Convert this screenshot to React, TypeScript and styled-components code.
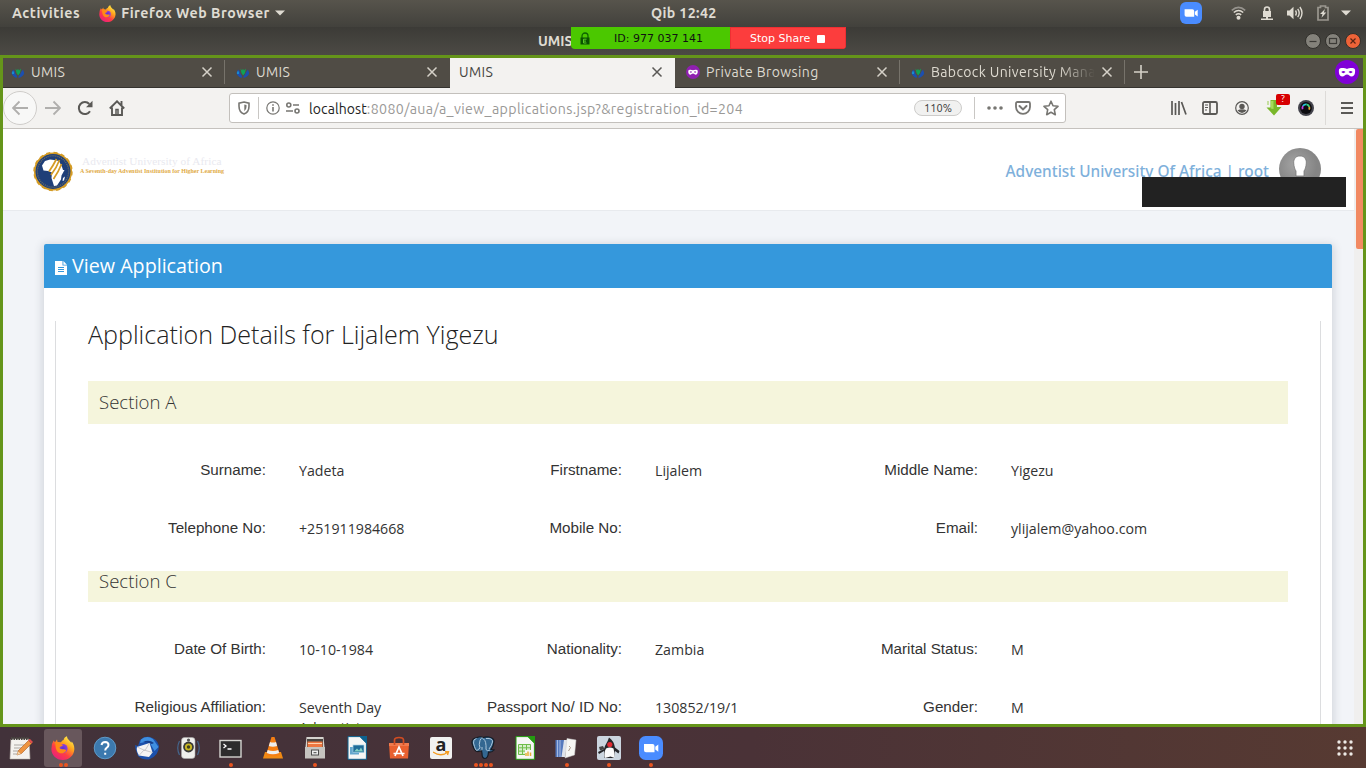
import React from "react";
import styled, { createGlobalStyle } from "styled-components";

const GlobalStyle = createGlobalStyle`
  * { box-sizing: border-box; }
  body { margin: 0; overflow: hidden; }
  svg { display: block; flex: none; }
`;

const uiFont = `"Ubuntu", "Noto Sans", "Open Sans", sans-serif`;
const pageFont = `"Open Sans", sans-serif`;

const Desktop = styled.div`
  position: relative;
  width: 1366px;
  height: 768px;
  display: flex;
  flex-direction: column;
  overflow: hidden;
  font-family: ${uiFont};
  white-space: nowrap;
`;

const Label = styled.span<{ $size?: number; $spacing?: number; $bold?: boolean; $color?: string }>`
  font-size: ${(p) => p.$size ?? 14}px;
  letter-spacing: ${(p) => p.$spacing ?? 0}px;
  font-weight: ${(p) => (p.$bold ? 700 : 400)};
  color: ${(p) => p.$color ?? "inherit"};
  line-height: 20px;
`;

/* ---------- system bar ---------- */

const SystemBar = styled.div`
  height: 27px;
  flex: none;
  display: grid;
  grid-template-columns: 651px 1fr 187px;
  align-items: center;
  padding-bottom: 1px;
  color: #dfdbd2;
  background: linear-gradient(#57544c, #42413c);
`;
const SystemLeft = styled.div`
  display: flex;
  align-items: center;
  padding-left: 12px;
`;
const AppMenu = styled.div`
  display: flex;
  align-items: center;
  gap: 5px;
  margin-left: 19px;
`;
const SystemTray = styled.div`
  display: flex;
  align-items: center;
  padding-left: 1px;
`;
const TrayItem = styled.div<{ $gap: number }>`
  margin-right: ${(p) => p.$gap}px;
`;

/* ---------- title bar ---------- */

const TitleBar = styled.div`
  height: 28px;
  flex: none;
  display: flex;
  align-items: center;
  justify-content: space-between;
  padding: 0 5px 0 538px;
  color: #dfdbd2;
  background: linear-gradient(#3c3b37, #4c4a45);
`;
const WindowButtons = styled.div`
  display: flex;
  gap: 4px;
`;
const SharePill = styled.div`
  position: absolute;
  left: 571px;
  top: 27px;
  width: 275px;
  height: 22px;
  display: flex;
  border-radius: 0 0 4px 4px;
  overflow: hidden;
  font-family: "DejaVu Sans", sans-serif;
`;
const ShareId = styled.div`
  width: 159px;
  display: flex;
  align-items: center;
  padding: 1px 0 0 9px;
  gap: 24px;
  background: #4bc800;
  color: #111;
`;
const StopShare = styled.div`
  flex: 1;
  display: flex;
  align-items: center;
  padding: 1px 0 0 19px;
  gap: 7px;
  background: #fc3d3d;
  border: 1px solid #ee2f33;
  color: #fff;
`;
const StopSquare = styled.i`
  width: 8px;
  height: 8px;
  background: #fff;
  border-radius: 1px;
`;

/* ---------- browser ---------- */

const Browser = styled.div`
  height: 672px;
  flex: none;
  display: flex;
  flex-direction: column;
  border: 3px solid #65951a;
`;
const TabStrip = styled.div`
  height: 30px;
  flex: none;
  display: flex;
  background: #504c45;
`;
const TabBox = styled.div<{ $active?: boolean; $first?: boolean; $divider?: boolean }>`
  width: ${(p) => (p.$first ? 222 : 225)}px;
  display: flex;
  align-items: center;
  padding-left: ${(p) => (p.$first ? 8 : p.$active ? 9 : 11)}px;
  padding-right: 12px;
  padding-bottom: 1px;
  gap: 6px;
  color: ${(p) => (p.$active ? "#45443f" : "#dedad0")};
  background: ${(p) => (p.$active ? "#f3f2f0" : "transparent")};
  border-bottom: 1px solid ${(p) => (p.$active ? "#f3f2f0" : "#35332f")};
  position: relative;
  &::after {
    content: "";
    display: ${(p) => (p.$divider ? "block" : "none")};
    position: absolute;
    right: 0;
    top: 2px;
    width: 1px;
    height: 24px;
    background: #77736b;
  }
`;
const TabTitle = styled.div<{ $fade?: boolean }>`
  flex: 1;
  overflow: hidden;
  mask-image: ${(p) => (p.$fade ? "linear-gradient(90deg,#000 78%,transparent 100%)" : "none")};
`;
const TabEnd = styled.div`
  flex: 1;
  display: flex;
  align-items: center;
  justify-content: space-between;
  padding: 0 4px 2px 9px;
  border-bottom: 1px solid #35332f;
`;

const Toolbar = styled.div`
  height: 41px;
  flex: none;
  display: flex;
  align-items: center;
  background: #f3f2f0;
  border-bottom: 1px solid #c5c2be;
`;
const NavButtons = styled.div`
  width: 226px;
  display: flex;
  align-items: center;
`;
const BackCircle = styled.div`
  width: 34px;
  height: 34px;
  border: 1px solid #cfcdca;
  border-radius: 50%;
  background: #f8f8f7;
  display: flex;
  align-items: center;
  justify-content: center;
  margin-right: 8px;
`;
const Spacer = styled.div<{ $w: number }>`
  width: ${(p) => p.$w}px;
  flex: none;
`;
const UrlBar = styled.div`
  width: 837px;
  height: 30px;
  display: flex;
  align-items: center;
  background: #fff;
  border: 1px solid #c3c0bc;
  border-radius: 3px;
  padding: 0 6px 0 8px;
`;
const Rule = styled.div<{ $h: number; $color?: string }>`
  width: 1px;
  height: ${(p) => p.$h}px;
  background: ${(p) => p.$color ?? "#c9c7c4"};
`;
const UrlText = styled.div`
  width: 605px;
  padding-top: 1px;
  color: #9a9997;
`;
const ZoomBadge = styled.div`
  width: 48px;
  height: 16px;
  border: 1px solid #cdccca;
  border-radius: 8px;
  background: #f1f1f0;
  display: flex;
  align-items: center;
  justify-content: center;
  color: #3c3c3b;
`;
const Extension = styled.div`
  position: relative;
`;
const ExtensionBadge = styled.div`
  position: absolute;
  left: 10px;
  top: -6px;
  width: 14px;
  height: 11px;
  border-radius: 2px;
  background: #d70000;
  color: #fff;
  font-size: 9px;
  line-height: 11px;
  text-align: center;
`;

/* ---------- page ---------- */

const Viewport = styled.div`
  flex: 1;
  min-height: 0;
  display: flex;
  overflow: hidden;
  font-family: ${pageFont};
`;
const Page = styled.div`
  flex: 1;
  display: flex;
  flex-direction: column;
  background: #f2f4f8;
`;
const ScrollTrack = styled.div`
  width: 9px;
  padding-left: 2px;
  background: #f0efee;
`;
const ScrollThumb = styled.div`
  height: 120px;
  background: #f28962;
  border-radius: 2px 0 0 2px;
`;
const PageHeader = styled.header`
  position: relative;
  height: 82px;
  flex: none;
  display: flex;
  justify-content: space-between;
  background: #fff;
  border-bottom: 1px solid #e8eaee;
`;
const Brand = styled.div`
  display: flex;
  padding: 22px 0 0 30px;
  gap: 7px;
`;
const BrandText = styled.div`
  display: flex;
  flex-direction: column;
  padding-top: 4px;
  font-family: "Liberation Serif", serif;
`;
const BrandName = styled.span`
  font-size: 11.3px;
  line-height: 13px;
  padding-left: 2px;
  color: #e9e9ef;
  letter-spacing: 0.06px;
`;
const BrandMotto = styled.span`
  font-size: 6px;
  line-height: 6px;
  font-weight: 700;
  color: #dfab46;
  letter-spacing: -0.02px;
`;
const Account = styled.div`
  display: flex;
  padding: 19px 33px 0 0;
  gap: 10px;
  color: #7eb0db;
`;
const AccountName = styled.div`
  font-family: "Noto Sans", sans-serif;
  padding-top: 14px;
  font-size: 15.4px;
  font-weight: 500;
  line-height: 20px;
`;
const Redaction = styled.div`
  position: absolute;
  left: 1139px;
  top: 48px;
  width: 204px;
  height: 30px;
  background: #222;
`;
const Card = styled.section`
  flex: none;
  width: 1288px;
  height: 600px;
  margin: 33px 0 0 41px;
  background: #fff;
  border-radius: 2px 2px 0 0;
  box-shadow: 0 2px 9px 2px rgba(50, 60, 80, 0.16);
`;
const CardHeader = styled.div`
  height: 44px;
  display: flex;
  align-items: center;
  padding: 0 0 0 11px;
  gap: 5px;
  background: #3598dc;
  border-radius: 2px 2px 0 0;
  color: #fff;
`;
const CardTitle = styled.h4`
  margin: 0 0 1px;
  font-weight: 400;
  font-size: 19.7px;
  line-height: 26px;
`;
const CardBody = styled.div`
  margin: 33px 11px 0;
  height: 520px;
  padding: 0 32px;
  border: solid #dcdddf;
  border-width: 0 1px;
`;
const Heading = styled.h3`
  margin: 0;
  height: 60px;
  font-weight: 300;
  font-size: 25.1px;
  line-height: 26px;
  color: #222;
`;
const SectionBar = styled.div<{ $h: number; $pad: number }>`
  height: ${(p) => p.$h}px;
  padding: ${(p) => p.$pad}px 0 0 11px;
  background: #f5f5dc;
  font-size: 18.6px;
  line-height: 19px;
  font-weight: 300;
  color: #333;
`;
const FieldGrid = styled.div<{ $top: number }>`
  display: grid;
  grid-template-columns: repeat(3, 178px 178px);
  grid-auto-rows: 58px;
  padding-top: ${(p) => p.$top}px;
  height: 147px;
`;
const FieldLabel = styled.div`
  text-align: right;
  font: 15.2px / 20px "Liberation Sans", sans-serif;
  color: #333;
`;
const FieldValue = styled.div`
  padding: 1px 20px 0 33px;
  font-size: 14.2px;
  line-height: 20px;
  color: #333;
  white-space: normal;
`;

/* ---------- dock ---------- */

const Dock = styled.div`
  flex: 1;
  display: flex;
  justify-content: space-between;
  align-items: flex-start;
  padding: 2px 13px 0 2px;
  background: linear-gradient(90deg, #42323a, #4a3237 55%, #573a32);
`;
const DockItems = styled.div`
  display: flex;
  gap: 4px;
`;
const DockItem = styled.div<{ $active?: boolean }>`
  position: relative;
  width: 38px;
  height: 38px;
  display: flex;
  align-items: center;
  justify-content: center;
  border-radius: 3px;
  background: ${(p) => (p.$active ? "#68575c" : "transparent")};
`;
const DockDots = styled.div`
  position: absolute;
  left: 0;
  right: 0;
  bottom: 0;
  display: flex;
  justify-content: center;
  gap: 1px;
`;
const DockDot = styled.i`
  width: 4px;
  height: 4px;
  border-radius: 50%;
  background: #e95420;
`;
const GridButton = styled.div`
  padding-top: 11px;
`;

/* ---------- icons ---------- */

const Firefox = ({ size, id }: { size: number; id: string }) => (
  <svg width={size} height={size} viewBox="0 0 24 24">
    <defs>
      <linearGradient id={id} x1="0.85" y1="0.05" x2="0.2" y2="0.95">
        <stop offset="0" stopColor="#fff44f" />
        <stop offset=".35" stopColor="#ffa21c" />
        <stop offset=".65" stopColor="#ff3d44" />
        <stop offset="1" stopColor="#e8207c" />
      </linearGradient>
      <radialGradient id={id + "p"}>
        <stop offset="0" stopColor="#5b34cf" />
        <stop offset="1" stopColor="#9640d8" />
      </radialGradient>
    </defs>
    <path fill={`url(#${id})`} d="M1 8 2.6 4.5 4 6.2 6 3.5 6.6 6 10 6.2C11 4.5 12 4.2 12.6 4 12.7 2 14.5.5 16 .2 16 3 19 4.5 20.3 6.7L20.8 5.5C23 8.5 24 12 23 15.5 21.5 21 17 24 12 24 5 24 .4 19 .4 13Z" />
    <circle cx="12" cy="12.600" r="4.600" fill={`url(#${id}p)`} />
    <path fill="#ff8a16" d="M4 6.3c2.5-.8 4 .2 5 1.3L12 9c-1 1.6-3.5 1.2-3.4 3 1.7 2.4 5 .3 6.7 2.2-2.2 4.600-8 3.600-9.600.200C4 11.300 5 9 4 6.300Z" />
  </svg>
);

const Camera = ({ size }: { size: number }) => (
  <svg width={size} height={size} viewBox="0 0 24 24">
    <rect width="24" height="24" rx="6.5" fill="#4a8cff" />
    <path fill="#fff" d="M5 8h8.5a2 2 0 0 1 2 2v6.2H7a2 2 0 0 1-2-2ZM16.3 10.7 19.3 8.5v7.3l-3-2.2Z" />
  </svg>
);

const Caret = () => (
  <svg width="10" height="6" viewBox="0 0 10 6"><path d="M0 .5h10L5 5.5Z" fill="#dfdbd2" /></svg>
);

const Wifi = () => (
  <svg width="15" height="14" viewBox="0 0 15 14" fill="none" strokeWidth="1.6">
    <path d="M.8 4.3Q7.5-1.5 14.2 4.3" stroke="#96938d" />
    <path d="M2.8 6.5Q7.5 2.5 12.2 6.5M4.8 8.8Q7.5 6.8 10.2 8.8" stroke="#dfdbd2" />
    <circle cx="7.5" cy="11.8" r="2" fill="#dfdbd2" />
  </svg>
);

const NetLock = () => (
  <svg width="12" height="15" viewBox="0 0 12 15">
    <path d="M3.5 6V3.5a2.5 2.5 0 0 1 5 0V6" fill="none" stroke="#dfdbd2" strokeWidth="1.6" />
    <path d="M2 5h8v6H7v1.5h5V14H0v-1.5h5V11H2Z" fill="#dfdbd2" />
  </svg>
);

const Speaker = () => (
  <svg width="16" height="14" viewBox="0 0 16 14">
    <path d="M0 4.5h2.5L6.5.8v12.4L2.5 9.500H0Z" fill="#dfdbd2" />
    <path d="M8.5 4.5q1.6 2.5 0 5M10.7 2.8q3 4.2 0 8.4M12.9 1q4.2 6 0 12" fill="none" stroke="#dfdbd2" strokeWidth="1.4" />
  </svg>
);

const Battery = () => (
  <svg width="12" height="16" viewBox="0 0 12 16">
    <path d="M1 2.5h2.5V1h5v1.5H11V15H1Z" fill="none" stroke="#9a978f" strokeWidth="1.7" />
    <path d="M8 4 3 9h2.5L4.5 12.7 9.3 7.6H6.8Z" fill="#dfdbd2" />
  </svg>
);

const WindowButton = ({ kind }: { kind: "min" | "max" | "close" }) => (
  <svg width="16" height="16" viewBox="0 0 16 16">
    <circle cx="8" cy="8" r="7.5" fill={kind === "close" ? "#ee6338" : "#84827b"} stroke="#31302c" />
    <g stroke={kind === "close" ? "#5a2414" : "#3c3b37"} fill="none" strokeWidth="1.2">
      {kind === "min" && <path d="M4.5 8.5h7" />}
      {kind === "max" && <rect x="4.5" y="5.5" width="7" height="5" />}
      {kind === "close" && <path d="m5.5 5.5 5 5m0-5-5 5" />}
    </g>
  </svg>
);

const ShareLock = () => (
  <svg width="10" height="13" viewBox="0 0 10 13">
    <path d="M2 6V4a3 3 0 0 1 6 0v2" fill="none" stroke="#0d6500" strokeWidth="1.3" />
    <rect x=".5" y="5.5" width="9" height="7" fill="#0a5400" />
    <path d="M6.5 7.2h-3v3.8h3M3.5 9.1h2.5" fill="none" stroke="#62d62a" strokeWidth=".9" />
  </svg>
);

const Globe = () => (
  <svg width="14" height="13" viewBox="0 0 14 13">
    <path fill="#1b4fb0" d="M2 3.500 3.500 5 4.500 8 6 10 5.500 12Q1.500 10.500.5 7ZM12 3.500l-1.500 2L9 8.500 7.500 10.500v1.500q5-1.500 5.700-5Z" />
    <path fill="#178bd0" d="M1 5.500h2v2.500H1Z" />
    <path fill="#0fa355" d="m4.500 2.500 1.500 2 1-1.700 1 1.700 2-2L9 7 7.200 9.500 5.500 7Z" />
  </svg>
);

const Cross = ({ color }: { color: string }) => (
  <svg width="12" height="12" viewBox="0 0 12 12"><path d="m1.5 1.5 9 9m0-9-9 9" stroke={color} strokeWidth="1.5" /></svg>
);

const Plus = () => (
  <svg width="14" height="14" viewBox="0 0 14 14"><path d="M7 0v14M0 7h14" stroke="#d5d1c8" strokeWidth="1.6" /></svg>
);

const Mask = ({ size, color }: { size: number; color: string }) => (
  <svg width={size} height={size} viewBox="0 0 24 24">
    <circle cx="12" cy="12" r="12" fill={color} />
    <path fill="#fff" fillRule="evenodd" d="M4 9.5C5 7.5 9.5 7.8 12 9c2.5-1.2 7-1.5 8 .5.5 3-.3 7-3.2 7-2.3 0-2.8-2-4.8-2s-2.500 2-4.800 2C4.300 16.500 3.500 12.500 4 9.500ZM6.300 12q2 2.300 4.200 0-2-2.200-4.200 0Zm7.200 0q2.200 2.300 4.200 0-2.200-2.200-4.200 0Z" />
  </svg>
);

const Arrow = ({ flip }: { flip?: boolean }) => (
  <svg width="16" height="16" viewBox="0 0 16 16" fill="none" stroke="#b0afad" strokeWidth="1.8">
    <path d={flip ? "M0 8h15M8.5 1.5 15 8l-6.5 6.5" : "M16 8H1M7.5 1.5 1 8l6.5 6.5"} />
  </svg>
);

const Reload = () => (
  <svg width="16" height="16" viewBox="0 0 16 16">
    <path d="M13 11.2A6 6 0 1 1 12.3 4" fill="none" stroke="#5a5956" strokeWidth="2" />
    <path d="M15.5.8V7.3H9Z" fill="#5a5956" />
  </svg>
);

const Home = () => (
  <svg width="16" height="16" viewBox="0 0 16 16" fill="none" stroke="#5a5956" strokeWidth="1.9">
    <path d="M.8 8.5 8 1.3l7.2 7.2M3 7.500V15h10V7.500M12.500 1v4" />
    <path d="M7 14.5v-5h2v5" strokeWidth="1.5" />
  </svg>
);

const Shield = () => (
  <svg width="12" height="14" viewBox="0 0 12 14">
    <path d="M6 1 11 2.2v3Q11 11 6 13 1 11 1 5.2v-3Z" fill="none" stroke="#777672" strokeWidth="1.6" />
    <path d="M6.3 3.5 8.5 4v2q0 2.8-2.2 4.2Z" fill="#777672" />
  </svg>
);

const Info = () => (
  <svg width="14" height="14" viewBox="0 0 14 14" fill="none" stroke="#777672">
    <circle cx="7" cy="7" r="6.2" strokeWidth="1.2" /><path d="M7 6v4.5M7 3.3v1.5" strokeWidth="1.6" />
  </svg>
);

const Permissions = () => (
  <svg width="14" height="12" viewBox="0 0 14 12" fill="none" stroke="#777672" strokeWidth="1.6">
    <circle cx="2.8" cy="3" r="2" /><path d="M7 3h6M0 9h7" /><circle cx="11" cy="9" r="2" />
  </svg>
);

const Dots = () => (
  <svg width="16" height="4" viewBox="0 0 16 4" fill="#777672"><circle cx="2" cy="2" r="1.8" /><circle cx="8" cy="2" r="1.8" /><circle cx="14" cy="2" r="1.8" /></svg>
);

const Pocket = () => (
  <svg width="16" height="14" viewBox="0 0 16 14" fill="none" stroke="#777672" strokeWidth="1.8">
    <path d="M2.5 1h11Q15 1 15 2.5V6a7 6.8 0 0 1-14 0V2.5Q1 1 2.5 1Z" /><path d="m4.5 5 3.5 3.4L11.5 5" strokeWidth="2" strokeLinecap="round" />
  </svg>
);

const Star = () => (
  <svg width="16" height="16" viewBox="0 0 16 16"><path d="m8 1.200 2 4.600 5 .5-3.700 3.400 1 5L8 12.200l-4.300 2.500 1-5L1 6.300l5-.5Z" fill="none" stroke="#777672" strokeWidth="1.6" strokeLinejoin="round" /></svg>
);

const Library = () => (
  <svg width="16" height="14" viewBox="0 0 16 14" stroke="#5a5956" strokeWidth="1.7" fill="none"><path d="M1 0v14M4.5 2v12M8 0v14M10.5 1 15 13.5" /></svg>
);

const Sidebar = () => (
  <svg width="16" height="14" viewBox="0 0 16 14" stroke="#5a5956" fill="none">
    <rect x="1" y="1" width="14" height="12" rx="1.5" strokeWidth="1.8" /><path d="M8 1v12" strokeWidth="1.6" /><path d="M3 4h3M3 6.5h3M3 9h2" strokeWidth="1.2" />
  </svg>
);

const Profile = () => (
  <svg width="14" height="14" viewBox="0 0 14 14">
    <circle cx="7" cy="7" r="6.3" fill="none" stroke="#5a5956" strokeWidth="1.2" />
    <circle cx="7" cy="5.4" r="2.7" fill="#5a5956" /><path d="M2.500 9.200Q7 7.300 11.500 9.200 9.500 12 7 12 4.500 12 2.500 9.200Z" fill="#5a5956" />
  </svg>
);

const Download = () => (
  <svg width="16" height="16" viewBox="0 0 16 16">
    <path d="M4.5 0H11v7h4.5L8 15.5.5 7.500H4.500Z" fill="#79b72a" /><path d="M5 1h2.500v8L3 8.500h2Z" fill="#a6d957" /><path d="M1 1h2v4H1Z" fill="#c6dfa0" />
  </svg>
);

const Lens = () => (
  <svg width="16" height="16" viewBox="0 0 16 16">
    <circle cx="8" cy="8" r="8" fill="#43434b" /><circle cx="8" cy="8" r="5.9" fill="#0c0c10" />
    <g fill="none" strokeWidth="1.8">
      <path d="M4.6 9.300A3.600 3.600 0 0 1 5 6" stroke="#c43de0" />
      <path d="M5 6a3.600 3.600 0 0 1 3.500-1.600" stroke="#25c9d8" />
      <path d="M8.500 4.400A3.600 3.600 0 0 1 11.300 7" stroke="#3fd07a" />
      <path d="M11.300 7a3.600 3.600 0 0 1-.3 2.600" stroke="#e8a934" />
    </g>
  </svg>
);

const Burger = () => (
  <svg width="12" height="12" viewBox="0 0 12 12"><path d="M0 1h12M0 6h12M0 11h12" stroke="#5a5956" strokeWidth="1.9" /></svg>
);

const Seal = () => (
  <svg width="40" height="41" viewBox="0 0 40 41">
    <circle cx="20" cy="20.5" r="18.3" fill="#1f3f78" stroke="#d49b24" strokeWidth="1.6" />
    <circle cx="20" cy="20.5" r="18.8" fill="none" stroke="#d49b24" strokeWidth="1.8" strokeDasharray="4 3.38" />
    <circle cx="20" cy="20.5" r="15.7" fill="none" stroke="#9c8b57" strokeWidth="1.4" strokeDasharray="1 1" strokeOpacity=".6" />
    <path fill="#fff" d="M9 14.500 12 10l5-1.500L21 9l5 1 3 6 1 3h1.500l-3 5.500-.500 4-4 6-3 .5-2.500-8 .500-5.500-4-1.500-4.500-.500Z" />
    <path fill="#fff" d="m30 27 2-1.500-1 4-1.500.5Z" />
    <path d="M23.500 8q-3 6-7.500 12.500M26.500 9q-3 8-8.500 15M28.500 13q-3 8-8 15" stroke="#d49b24" strokeWidth="1.7" fill="none" />
  </svg>
);

const Avatar = () => (
  <svg width="42" height="42" viewBox="0 0 42 42">
    <defs><radialGradient id="avatar" cx=".4" cy=".4"><stop offset="0" stopColor="#a5a5a5" /><stop offset="1" stopColor="#858585" /></radialGradient></defs>
    <circle cx="21" cy="21" r="21" fill="url(#avatar)" />
    <path d="M21 8c4 0 6.500 2.500 6.300 7-.2 4-1.300 6.500-2.300 8v5h-8v-5c-1-1.500-2.100-4-2.300-8C14.500 10.500 17 8 21 8Z" fill="#fff" stroke="#777" strokeWidth=".8" />
  </svg>
);

const FileSvg = styled.svg`
  margin-top: 4px;
`;
const FileIcon = () => (
  <FileSvg width="12" height="14" viewBox="0 0 12 14">
    <path fill="#fff" d="M0 0h7.500v4.500H12V14H0Z" /><path fill="#fff" d="M8.400 0 12 3.700H8.400Z" />
    <path d="M3 6.500h6M3 8.500h6M3 10.500h6" stroke="#3598dc" />
  </FileSvg>
);

const TextEditor = () => (
  <svg width="24" height="24" viewBox="0 0 24 24">
    <path d="M2 3h18l1 20H1Z" fill="#f4f2ee" stroke="#bdb8b0" strokeWidth=".6" />
    <path d="M2 2.500h18" stroke="#47443f" strokeWidth="3" strokeDasharray="1.5 1" />
    <path d="M5 9h10M5 12h8M4 15h7M4 18h5" stroke="#aaa7a2" />
    <path d="m8 19 1.500-4.500 10-10 3 3-10 10Z" fill="#ee9440" stroke="#a95a1f" strokeWidth=".6" /><path d="m19 4 2-1 3 3-1.500 1.500Z" fill="#e04d4d" /><path d="m8 19 1.200-3.500 2.500 2.300Z" fill="#f3d5aa" />
  </svg>
);
const Help = () => (
  <svg width="24" height="24" viewBox="0 0 24 24">
    <circle cx="12" cy="12" r="10.8" fill="#3c79ae" stroke="#5f9ac8" />
    <path d="M8.500 9Q9 6 12.200 6 15.500 6.200 15.500 9 15.500 10.500 13.700 11.800 12.200 13 12.200 14.500M12.200 16.700v2" stroke="#fff" strokeWidth="2" fill="none" />
  </svg>
);
const Mail = () => (
  <svg width="24" height="24" viewBox="0 0 24 24">
    <path d="M5 4Q9 0 14 .8q8 1.500 10 9Q24 20 14 23.500 7 24 3 20L.5 13 0 9l3 1Z" fill="#1b50ab" />
    <path d="M6 3.500Q12-1 18 3l5.500 8-4 4-4-7-5-2L5 7Z" fill="#3f8fe0" />
    <path d="M8 6q6-3 11 1l-2 1-4-1Z" fill="#163f8c" />
    <path d="m2 11 12.500-4 3 9.500-3.500 4.500-10-1.500Q1 15 2 11Z" fill="#f4f4f4" /><path d="m2 11 8 3.500L14.500 7M4 19.500l5-5.500 8.500 2.500" stroke="#bcbcc2" strokeWidth=".8" fill="none" />
  </svg>
);
const Rhythm = () => (
  <svg width="24" height="24" viewBox="0 0 24 24">
    <path d="M2.500 5q-3.500 7 0 14M20.500 5q3.500 7 0 14" stroke="#44668e" strokeWidth="1.200" fill="none" />
    <rect x="4.500" y="1.500" width="13.500" height="21" rx="3" fill="#efefec" stroke="#aaa" strokeWidth=".6" />
    <circle cx="11.500" cy="4" r="1.600" fill="#555" /><circle cx="11.500" cy="11" r="5.400" fill="#393939" /><circle cx="11.500" cy="11" r="3.600" fill="#c8b624" /><circle cx="11.500" cy="11" r="1.700" fill="#42401f" />
  </svg>
);
const Terminal = () => (
  <svg width="24" height="24" viewBox="0 0 24 24">
    <rect x="1" y="4.500" width="21" height="16.500" fill="#2d2d2d" stroke="#d5d5d0" strokeWidth="1.4" />
    <path d="m4.500 8 2.500 2-2.500 2M8.500 13h4" stroke="#fff" strokeWidth="1.300" fill="none" />
  </svg>
);
const Cone = () => (
  <svg width="24" height="24" viewBox="0 0 24 24">
    <path d="m4 16-2 6.500h20L20 16Z" fill="#f08a13" /><path d="M10.500 1h3L19 19q-7 2.500-14 0Z" fill="#f57e13" />
    <path d="m9 6-1.200 4q4 1.500 8.300 0L15 6q-3 1-6 0ZM6.700 14l-1 3q6 2.500 12.500 0l-1-3q-5 2-10.500 0Z" fill="#eee" />
  </svg>
);
const Files = () => (
  <svg width="24" height="24" viewBox="0 0 24 24">
    <path d="M3.500 1h17l1 10h-19Z" fill="#d5d3cf" /><path d="M4 3h16v8H4Z" fill="#4a4642" /><path d="M4.500 5.500h15V11h-15Z" fill="#ed7640" /><path d="M5 7.500h14" stroke="#ffd2ae" />
    <path d="M2 11h20v11.500H2Z" fill="#c6c4c0" /><rect x="8.500" y="14" width="7" height="5" fill="#eee" stroke="#4d4d4d" /><path d="M10.500 16.700h3" stroke="#444" />
  </svg>
);
const Document = ({ color, sheet }: { color: string; sheet?: boolean }) => (
  <svg width="24" height="24" viewBox="0 0 24 24">
    <path d="M3 .6h12l6.400 6.400v16.300H3Z" fill="#f6f6f5" stroke={color} strokeWidth="1" /><path d="M14 0h8v8Z" fill={color} />
    {sheet ? (
      <><path d="M5.500 8.500h12v10h-12Zm0 3.300h12m-12 3.300h12M9.500 8.500v10m4-10v10" fill="#d7efcc" stroke="#6fbd4a" /><rect x="12" y="14" width="7" height="6" fill="#f6f6f5" /><path d="M13 20v-3m2 3v-4.500m2.500 4.500v-3.500" stroke="#e5b039" strokeWidth="1.500" /></>
    ) : (
      <><rect x="5" y="11" width="9" height="7.500" fill="#63a6cd" /><rect x="8" y="9" width="11" height="7.500" fill="#1f6b98" stroke="#a9d3e5" strokeWidth=".7" /><path d="m9 15.500 3-3 2 2 2-3 2 4Z" fill="#82d1c3" /></>
    )}
  </svg>
);
const Software = () => (
  <svg width="24" height="24" viewBox="0 0 24 24">
    <path d="M2 7h20l-1 15.500H3Z" fill="#e9602f" /><path d="M2 7h20v3H2Z" fill="#f07a4d" /><path d="M7.500 9V4q0-2.500 4.500-2.500T16.500 4v5" stroke="#d04c22" strokeWidth="1.700" fill="none" />
    <path d="m8 20 4-9 4 9M6.500 17.500h11" stroke="#fff" strokeWidth="1.700" fill="none" />
  </svg>
);
const AmazonBox = styled.div`
  position: relative;
  width: 22px;
  height: 22px;
  border-radius: 2px;
  background: #f1f1f0;
  color: #222;
  font: 700 18px / 15px "Open Sans", sans-serif;
  text-align: center;
  svg { position: absolute; left: 3px; bottom: 2px; }
`;
const Amazon = () => (
  <AmazonBox>a<svg width="17" height="6" viewBox="0 0 17 6"><path d="M0 1q8 5.500 15 0M12 .7h3.500L14.500 4" stroke="#f49b20" strokeWidth="1.400" fill="none" /></svg></AmazonBox>
);
const Elephant = () => (
  <svg width="24" height="24" viewBox="0 0 24 24">
    <path d="M6 1.500Q10 0 12 1.500q3-1 6-.5 5 1 5 4.500-.5 4.500-3 8l3 .5q-2 2.500-5.500 2-.5 6.500-3.500 6.500-3 0-3-5l-.5-3q-2 1-3 1Q3 16 1 7 .5 2.500 6 1.500Z" fill="#336791" stroke="#151b24" strokeWidth="1.200" />
    <path d="M5.500 2.500Q2 3 2.500 7 4.500 15 6 14.500l3-2.500Q7.500 8.500 9 4.500T12.500 3q3 2 2.500 10.500 1 2 4 .5M15 2.500q7-.500 6.500 3.500-1 4-3.500 7M11 11q.5 3-1 3.500" stroke="#b9d0e2" strokeWidth=".9" fill="none" />
  </svg>
);
const Books = () => (
  <svg width="24" height="24" viewBox="0 0 24 24">
    <path d="M.5 4h9L8 21H.5Z" fill="#5579bd" /><path d="M2.500 4v17M5 4v17" stroke="#b9c8e8" strokeWidth=".8" /><path d="M9 4h4l-3 17H6.500Z" fill="#dfe3ea" />
    <path d="m12 2.500 9 1.500-1.500 15-9.500 3Z" fill="#f6f6f4" stroke="#ccc" strokeWidth=".5" /><path d="m14 10 1.500 1.500-2 3.500" stroke="#a89888" fill="none" />
  </svg>
);
const Duke = () => (
  <svg width="24" height="24" viewBox="0 0 24 24">
    <rect width="24" height="24" rx="2" fill="#cbd5df" />
    <path d="M8 10q3-5 4-8.500 5 3.500 6 10l4.500 3.500-1 2.500L18 15l-1 7H7.500L7 15l-5 3-1-2 6-3Z" fill="#26262a" />
    <path d="M9 12.500q4-2 7.500 0 1.500 5 1 9.500l-4-1.500L8 22q-1.500-5 1-9.500Z" fill="#fafafa" />
    <circle cx="12.800" cy="8.500" r="2.600" fill="#e22c34" /><path d="m2 11 4-1 1.500 3-4.500 1.500Z" fill="#444" />
  </svg>
);

const AppGrid = () => (
  <svg width="16" height="16" viewBox="0 0 16 16" fill="#eeeae6">
    {[2, 8, 14].map((y) => [2, 8, 14].map((x) => <circle key={`${x}-${y}`} cx={x} cy={y} r="1.7" />))}
  </svg>
);

/* ---------- data ---------- */

type Field = [string, string];

const sectionA: Field[] = [
  ["Surname:", "Yadeta"], ["Firstname:", "Lijalem"], ["Middle Name:", "Yigezu"],
  ["Telephone No:", "+251911984668"], ["Mobile No:", ""], ["Email:", "ylijalem@yahoo.com"],
];
const sectionC: Field[] = [
  ["Date Of Birth:", "10-10-1984"], ["Nationality:", "Zambia"], ["Marital Status:", "M"],
  ["Religious Affiliation:", "Seventh Day Adventist"], ["Passport No/ ID No:", "130852/19/1"], ["Gender:", "M"],
];

const dockApps: { icon: React.ReactNode; dots?: number; active?: boolean }[] = [
  { icon: <TextEditor /> },
  { icon: <Firefox size={24} id="ffDock" />, dots: 2, active: true },
  { icon: <Help /> },
  { icon: <Mail /> },
  { icon: <Rhythm /> },
  { icon: <Terminal />, dots: 1 },
  { icon: <Cone /> },
  { icon: <Files />, dots: 1 },
  { icon: <Document color="#0d628f" /> },
  { icon: <Software /> },
  { icon: <Amazon /> },
  { icon: <Elephant />, dots: 4 },
  { icon: <Document color="#249b10" sheet /> },
  { icon: <Books />, dots: 1 },
  { icon: <Duke />, dots: 1 },
  { icon: <Camera size={24} />, dots: 1 },
];

const Fields = ({ items, top }: { items: Field[]; top: number }) => (
  <FieldGrid $top={top}>
    {items.map(([label, value]) => (
      <React.Fragment key={label}>
        <FieldLabel>{label}</FieldLabel>
        <FieldValue>{value}</FieldValue>
      </React.Fragment>
    ))}
  </FieldGrid>
);

export default function App() {
  return (
    <Desktop>
      <GlobalStyle />
      <SystemBar>
        <SystemLeft>
          <Label $bold $size={14.2} $spacing={0.5}>Activities</Label>
          <AppMenu>
            <Firefox size={17} id="ffTop" />
            <Label $bold $size={14.2} $spacing={0.5}>Firefox Web Browser</Label>
            <Caret />
          </AppMenu>
        </SystemLeft>
        <Label $bold $size={14.2} $spacing={0.35}>Qib 12:42</Label>
        <SystemTray>
          <TrayItem $gap={29}><Camera size={22} /></TrayItem>
          <TrayItem $gap={15}><Wifi /></TrayItem>
          <TrayItem $gap={14}><NetLock /></TrayItem>
          <TrayItem $gap={14}><Speaker /></TrayItem>
          <TrayItem $gap={12}><Battery /></TrayItem>
          <Caret />
        </SystemTray>
      </SystemBar>
      <TitleBar>
        <Label $bold $size={14}>UMIS</Label>
        <WindowButtons>
          <WindowButton kind="min" />
          <WindowButton kind="max" />
          <WindowButton kind="close" />
        </WindowButtons>
      </TitleBar>
      <SharePill>
        <ShareId><ShareLock /><Label $size={11}>ID: 977 037 141</Label></ShareId>
        <StopShare><Label $size={11}>Stop Share</Label><StopSquare /></StopShare>
      </SharePill>

      <Browser>
        <TabStrip>
          <TabBox $first $divider><Globe /><TabTitle><Label $spacing={0.4}>UMIS</Label></TabTitle><Cross color="#d5d1c8" /></TabBox>
          <TabBox><Globe /><TabTitle><Label $spacing={0.4}>UMIS</Label></TabTitle><Cross color="#d5d1c8" /></TabBox>
          <TabBox $active><TabTitle><Label $spacing={0.4}>UMIS</Label></TabTitle><Cross color="#5a5956" /></TabBox>
          <TabBox $divider><Mask size={14} color="#8f1fb0" /><TabTitle><Label $spacing={0.4}>Private Browsing</Label></TabTitle><Cross color="#d5d1c8" /></TabBox>
          <TabBox $divider><Globe /><TabTitle $fade><Label $spacing={0.38}>Babcock University Management</Label></TabTitle><Cross color="#d5d1c8" /></TabBox>
          <TabEnd><Plus /><Mask size={24} color="#8000d7" /></TabEnd>
        </TabStrip>
        <Toolbar>
          <NavButtons>
            <BackCircle><Arrow /></BackCircle>
            <Arrow flip /><Spacer $w={16} />
            <Reload /><Spacer $w={16} />
            <Home />
          </NavButtons>
          <UrlBar>
            <Shield /><Spacer $w={8} /><Rule $h={22} /><Spacer $w={7} />
            <Info /><Spacer $w={6} /><Permissions /><Spacer $w={9} />
            <UrlText><Label $color="#222" $spacing={0.1}>localhost</Label><Label $size={14.2} $spacing={0.36}>:8080/aua/a_view_applications.jsp?&amp;registration_id=204</Label></UrlText>
            <ZoomBadge><Label $size={11}>110%</Label></ZoomBadge>
            <Spacer $w={12} /><Rule $h={22} /><Spacer $w={12} />
            <Dots /><Spacer $w={12} /><Pocket /><Spacer $w={12} /><Star />
          </UrlBar>
          <Spacer $w={105} /><Library />
          <Spacer $w={15} /><Sidebar />
          <Spacer $w={17} /><Profile />
          <Spacer $w={17} /><Extension><Download /><ExtensionBadge>?</ExtensionBadge></Extension>
          <Spacer $w={16} /><Lens />
          <Spacer $w={11} /><Rule $h={34} $color="#dddbd8" />
          <Spacer $w={15} /><Burger />
        </Toolbar>
        <Viewport>
          <Page>
            <PageHeader>
              <Brand>
                <Seal />
                <BrandText>
                  <BrandName>Adventist University of Africa</BrandName>
                  <BrandMotto>A Seventh-day Adventist Institution for Higher Learning</BrandMotto>
                </BrandText>
              </Brand>
              <Account>
                <AccountName>Adventist University Of Africa | root</AccountName>
                <Avatar />
              </Account>
              <Redaction />
            </PageHeader>
            <Card>
              <CardHeader><FileIcon /><CardTitle>View Application</CardTitle></CardHeader>
              <CardBody>
                <Heading>Application Details for Lijalem Yigezu</Heading>
                <SectionBar $h={43} $pad={11}>Section A</SectionBar>
                <Fields items={sectionA} top={36} />
                <SectionBar $h={31} $pad={0}>Section C</SectionBar>
                <Fields items={sectionC} top={37} />
              </CardBody>
            </Card>
          </Page>
          <ScrollTrack><ScrollThumb /></ScrollTrack>
        </Viewport>
      </Browser>

      <Dock>
        <DockItems>
          {dockApps.map((app, i) => (
            <DockItem key={i} $active={app.active}>
              {app.icon}
              <DockDots>{Array.from({ length: app.dots ?? 0 }, (_, d) => <DockDot key={d} />)}</DockDots>
            </DockItem>
          ))}
        </DockItems>
        <GridButton><AppGrid /></GridButton>
      </Dock>
    </Desktop>
  );
}
